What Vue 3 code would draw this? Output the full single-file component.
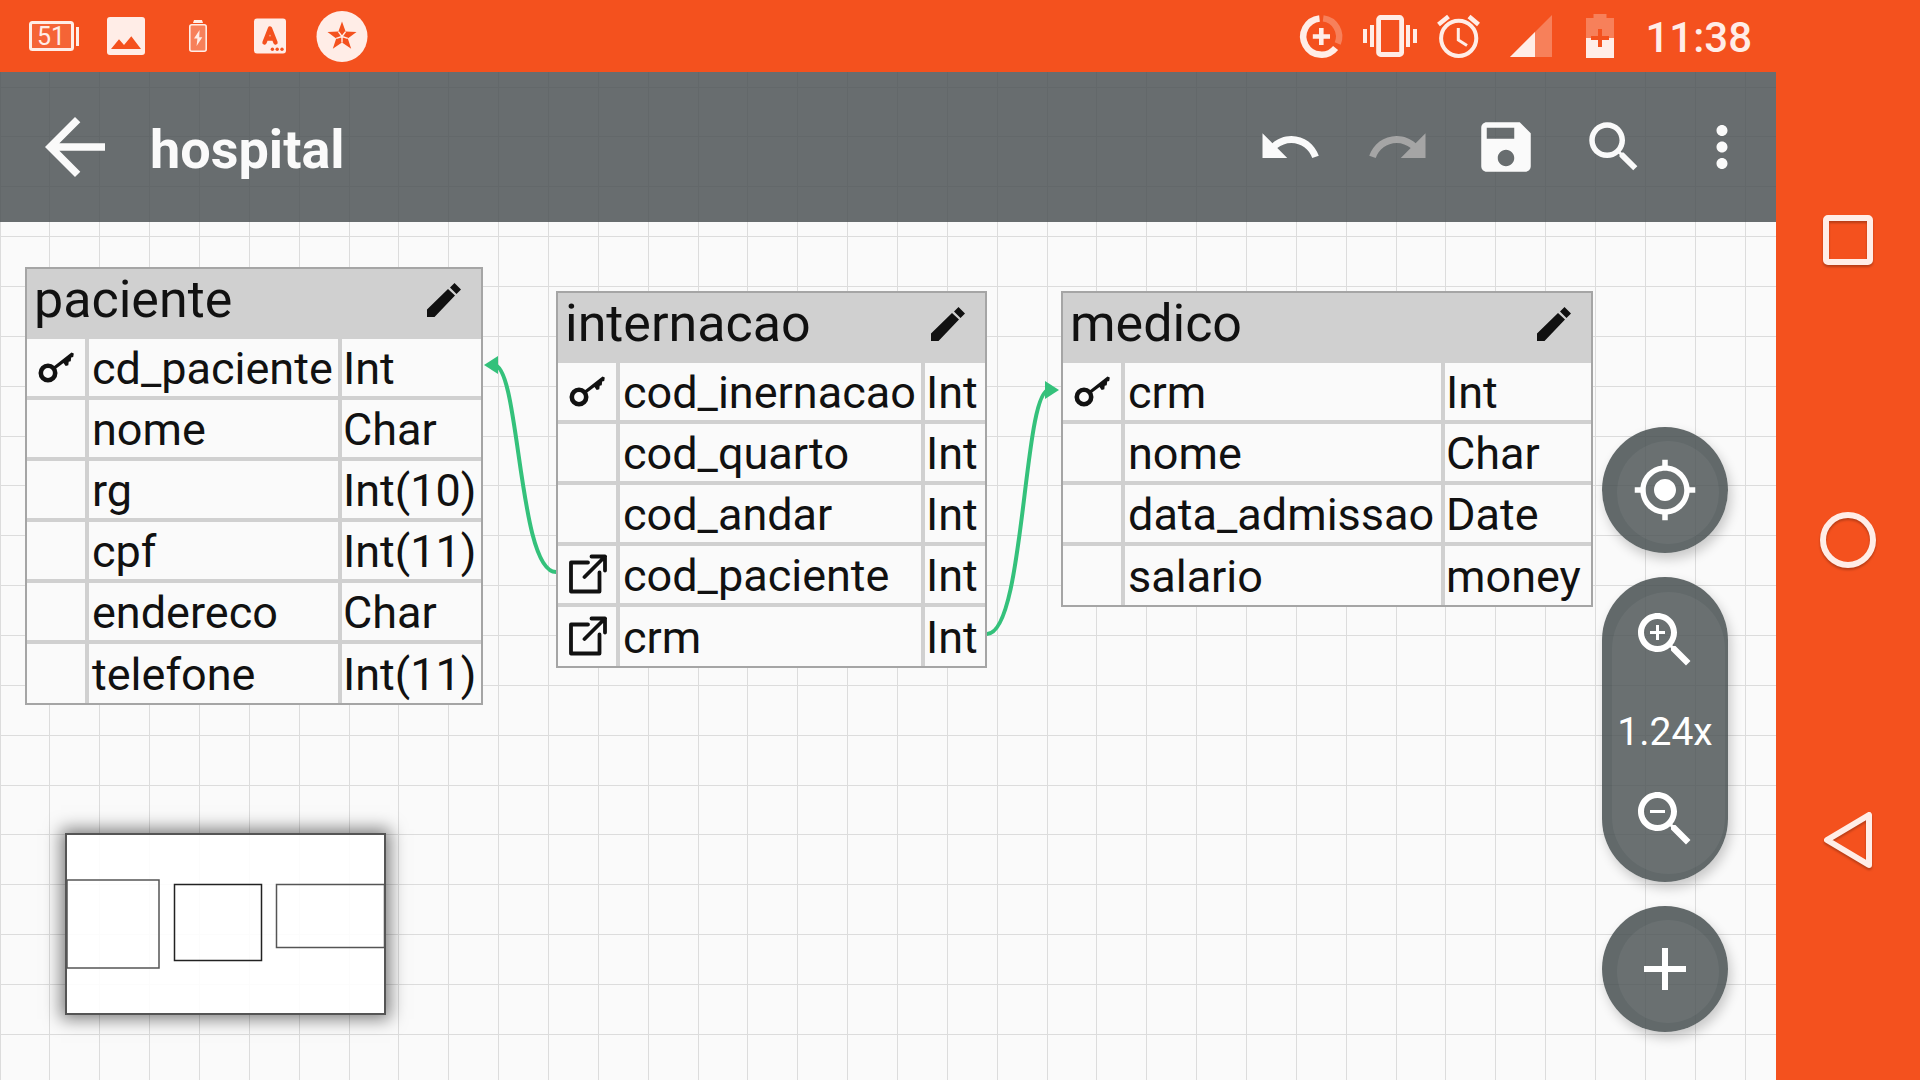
<script setup>
const tables = [
  {
    name: 'paciente', x: 25, y: 195, widths: [58, 253, 143],
    columns: [
      { key: 'primary', name: 'cd_paciente', type: 'Int' },
      { name: 'nome', type: 'Char' },
      { name: 'rg', type: 'Int(10)' },
      { name: 'cpf', type: 'Int(11)' },
      { name: 'endereco', type: 'Char' },
      { name: 'telefone', type: 'Int(11)' },
    ],
  },
  {
    name: 'internacao', x: 556, y: 219, widths: [58, 305, 64],
    columns: [
      { key: 'primary', name: 'cod_inernacao', type: 'Int' },
      { name: 'cod_quarto', type: 'Int' },
      { name: 'cod_andar', type: 'Int' },
      { key: 'foreign', name: 'cod_paciente', type: 'Int' },
      { key: 'foreign', name: 'crm', type: 'Int' },
    ],
  },
  {
    name: 'medico', x: 1061, y: 219, widths: [58, 320, 150],
    columns: [
      { key: 'primary', name: 'crm', type: 'Int' },
      { name: 'nome', type: 'Char' },
      { name: 'data_admissao', type: 'Date' },
      { name: 'salario', type: 'money' },
    ],
  },
]

const lens = 'M15.5 14h-.79l-.28-.27C15.41 12.59 16 11.11 16 9.5 16 5.91 13.09 3 9.5 3S3 5.91 3 9.5 5.91 16 9.5 16c1.61 0 3.09-.59 4.23-1.57l.27.28v.79l5 4.99L20.49 19l-4.99-5zm-6 0C7.01 14 5 11.99 5 9.5S7.01 5 9.5 5 14 7.01 14 9.5 11.99 14 9.5 14z'

const actions = [
  { label: 'Undo', path: 'M12.5 8c-2.65 0-5.05.99-6.9 2.6L2 7v9h9l-3.62-3.62c1.39-1.16 3.16-1.88 5.12-1.88 3.54 0 6.55 2.31 7.6 5.5l2.37-.78C21.08 11.03 17.15 8 12.5 8z' },
  { label: 'Redo', disabled: true, path: 'M18.4 10.6C16.55 8.99 14.15 8 11.5 8c-4.65 0-8.58 3.03-9.96 7.22L3.9 16c1.05-3.19 4.05-5.5 7.6-5.5 1.95 0 3.73.72 5.12 1.88L13 16h9V7l-3.6 3.6z' },
  { label: 'Save', path: 'M17 3H5c-1.11 0-2 .9-2 2v14c0 1.1.89 2 2 2h14c1.1 0 2-.9 2-2V7l-4-4zm-5 16c-1.66 0-3-1.34-3-3s1.34-3 3-3 3 1.34 3 3-1.34 3-3 3zm3-10H5V5h10v4z' },
  { label: 'Search', path: lens },
  { label: 'More options', path: 'M12 8c1.1 0 2-.9 2-2s-.9-2-2-2-2 .9-2 2 .9 2 2 2zm0 2c-1.1 0-2 .9-2 2s.9 2 2 2 2-.9 2-2-.9-2-2-2zm0 6c-1.1 0-2 .9-2 2s.9 2 2 2 2-.9 2-2-.9-2-2-2z' },
]

// Seven grid squares span 349 px at the current zoom.
let gridPath = ''
for (let i = 0; i < 80; i++) {
  const p = Math.floor((i * 349) / 7)
  gridPath += `M${p} 0h1v4000h-1zM0 ${p + 15}h4000v1h-4000z`
}
</script>

<template>
  <div class="device">
    <div class="screen">
      <header class="status">
        <div class="notices">
          <svg class="glyph" viewBox="0 0 52 72">
            <rect x="2.5" y="22.5" width="42" height="27" rx="2" fill-opacity=".12" stroke="#ffede7" stroke-width="3" />
            <rect x="48" y="27" width="3" height="19" />
            <text x="23" y="45" text-anchor="middle" class="level">51</text>
          </svg>
          <svg class="glyph" viewBox="0 0 52 72">
            <rect x="7" y="17" width="38" height="38" rx="3" />
            <path class="cut" d="M11 49l8-9.700 5 5.700 7.300-8.700L41 49z" />
          </svg>
          <svg class="glyph" viewBox="0 0 52 72">
            <path d="M22 20h8l1 3H21z" />
            <rect x="17.800" y="24.800" width="16.400" height="26.400" rx="2" fill-opacity=".3" stroke="#ffede7" stroke-width="1.600" />
            <path d="M27.600 30L22 38.600h3.400L24.600 46l5.700-8.700h-3.100z" />
          </svg>
          <svg class="glyph" viewBox="0 0 52 72">
            <rect x="10" y="18.500" width="32" height="35" rx="3" />
            <path d="M20.500 42.500L26 28.500l5.500 14M23 38.500h6" fill="none" stroke="#f4511e" stroke-width="4.400" stroke-linecap="round" stroke-linejoin="round" />
            <g class="cut">
              <circle cx="28.400" cy="49.300" r="1.700" />
              <circle cx="33.200" cy="49.300" r="1.700" />
              <circle cx="38" cy="49.300" r="1.700" />
            </g>
          </svg>
          <svg class="glyph" viewBox="0 0 52 72">
            <circle cx="26" cy="36.500" r="25.500" />
            <path class="cut" d="M26 21.500l3.600 10.100 10.900.4-8.700 6.400 3.400 10.300-9.200-6.100-9.200 6.100 3.400-10.300-8.700-6.400 10.900-.4z" />
            <path d="M26 36.500l3.600-4.900M26 36.500l5.800 1.900M26 36.500v6.100M26 36.500l-5.800 1.900M26 36.500l-3.600-4.900" stroke="#ffede7" stroke-width="1.400" />
          </svg>
        </div>
        <div class="system">
          <svg class="glyph" viewBox="0 0 52 72">
            <g fill="none" stroke="#ffede7" stroke-width="6.500">
              <path d="M24.500 18.400A18.200 18.200 0 1 0 40.600 48" />
              <path d="M28.200 18.400A18.200 18.200 0 0 1 42.700 43.500" opacity=".3" />
            </g>
            <path d="M24 28h4.600v6.200H35v4.600h-6.400V45H24v-6.200h-6.200v-4.600H24z" />
          </svg>
          <svg class="glyph" viewBox="0 0 52 72">
            <rect x="13.600" y="17.500" width="23" height="37" rx="2" fill="none" stroke="#ffede7" stroke-width="4.800" />
            <path d="M-2 29h4v14h-4zM5 25h4v22H5zM41 25h4v22h-4zM48 29h4v14h-4z" />
          </svg>
          <svg class="glyph" viewBox="0 0 52 72">
            <g fill="none" stroke="#ffede7" stroke-width="4">
              <circle cx="23.700" cy="38.300" r="17.600" />
              <path d="M3.500 24.500l10-8M34 16.500l9.500 8" stroke-width="4.600" />
              <path d="M23.300 28v12l8.700 5.600" stroke-width="3" />
            </g>
          </svg>
          <svg class="glyph" viewBox="0 0 52 72">
            <path d="M5 57l42-42v42z" opacity=".3" />
            <path d="M5 57l25-25v25z" />
          </svg>
          <svg class="glyph" viewBox="0 0 52 72">
            <path d="M11 38V18h7.500v-4h13v4H39v20z" opacity=".3" />
            <path d="M11 38h28v20H11z" />
            <path class="cut" d="M23 29h4v7h7v4h-7v7h-4v-7h-7v-4h7z" />
          </svg>
          <time class="clock">11:38</time>
        </div>
      </header>

      <main class="work">
        <svg class="backdrop" aria-hidden="true">
          <path :d="gridPath" fill="#dcdcdc" />
        </svg>

        <header class="appbar">
          <button class="back" aria-label="Back">
            <svg viewBox="0 0 24 24"><path d="M20 11H7.830l5.590-5.590L12 4l-8 8 8 8 1.410-1.410L7.830 13H20v-2z" /></svg>
          </button>
          <h1 class="title">hospital</h1>
          <nav class="actions">
            <button v-for="a in actions" :key="a.label" :aria-label="a.label" :disabled="a.disabled">
              <svg viewBox="0 0 24 24"><path :d="a.path" /></svg>
            </button>
          </nav>
        </header>

        <svg class="links" aria-hidden="true">
          <path class="wire" d="M494 293C520 293 518 500 556 500" />
          <path class="tip" d="M484 293l14-9v18z" />
          <path class="wire" d="M987 562C1025 562 1023 318 1049 318" />
          <path class="tip" d="M1059 318l-14-9v18z" />
        </svg>

        <table
          v-for="t in tables"
          :key="t.name"
          class="entity"
          :style="{ left: t.x + 'px', top: t.y + 'px' }"
        >
          <colgroup>
            <col v-for="(w, i) in t.widths" :key="i" :style="{ width: w + 'px' }" />
          </colgroup>
          <thead>
            <tr>
              <th colspan="3">
                <div class="head">
                  {{ t.name }}
                  <button class="edit" :aria-label="'Edit ' + t.name">
                    <svg viewBox="0 0 34 34"><path d="M0 34v-7.500L21 6l7 6.500L7.500 34zM23 4.500L27.500 0 34 6.500 29.500 11z" /></svg>
                  </button>
                </div>
              </th>
            </tr>
          </thead>
          <tbody>
            <tr v-for="c in t.columns" :key="c.name">
              <td class="mark">
                <svg v-if="c.key === 'primary'" viewBox="0 0 40 40">
                  <circle cx="12" cy="26" r="7.200" fill="none" stroke="#111" stroke-width="4.600" />
                  <path d="M17 20L35.500 5.500l2.300 1-.6 3.500-2 .6-.5 3.700-2 .4-.4 3.600-2.600.6-2.200-3-8 6.200z" />
                </svg>
                <svg v-else-if="c.key === 'foreign'" viewBox="0 0 40 40">
                  <path d="M21 8.500H4v29h28.500V18.500M24.500 2.500H38v14M38 2.500L17.500 23" fill="none" stroke="#111" stroke-width="3.800" stroke-linecap="round" stroke-linejoin="round" />
                </svg>
              </td>
              <td class="field">{{ c.name }}</td>
              <td>{{ c.type }}</td>
            </tr>
          </tbody>
        </table>

        <svg class="minimap" viewBox="0 0 321 182" role="img" aria-label="Diagram overview">
          <g fill="none" stroke="#555" stroke-width="1.500">
            <rect x="2" y="47" width="92" height="88" />
            <rect x="109.500" y="51.500" width="87" height="76" stroke="#222" />
            <rect x="211.500" y="51.500" width="108" height="63" />
            <rect x="1" y="1" width="319" height="180" stroke-width="2" />
          </g>
        </svg>

        <aside class="controls">
          <button class="round" aria-label="Center diagram">
            <svg class="small" viewBox="0 0 24 24"><path d="M12 8c-2.210 0-4 1.790-4 4s1.790 4 4 4 4-1.790 4-4-1.790-4-4-4zm8.940 3c-.46-4.170-3.770-7.480-7.940-7.940V1h-2v2.060C6.830 3.520 3.520 6.830 3.060 11H1v2h2.060c.46 4.170 3.770 7.480 7.940 7.940V23h2v-2.060c4.170-.46 7.480-3.770 7.940-7.940H23v-2h-2.060zM12 19c-3.870 0-7-3.130-7-7s3.130-7 7-7 7 3.130 7 7-3.130 7-7 7z" /></svg>
          </button>
          <div class="zoom">
            <button aria-label="Zoom in">
              <svg viewBox="0 0 24 24"><path :d="lens" /><path d="M12 10h-2v2H9v-2H7V9h2V7h1v2h2v1z" /></svg>
            </button>
            <output class="factor">1.24x</output>
            <button aria-label="Zoom out">
              <svg viewBox="0 0 24 24"><path :d="lens" /><path d="M7 9h5v1H7z" /></svg>
            </button>
          </div>
          <button class="round" aria-label="Add table">
            <svg viewBox="0 0 24 24"><path d="M19 13h-6v6h-2v-6H5v-2h6V5h2v6h6v2z" /></svg>
          </button>
        </aside>
      </main>
    </div>

    <nav class="navbar">
      <button aria-label="Recent apps">
        <svg viewBox="0 0 60 60"><rect x="8" y="8" width="44" height="44" rx="2" /></svg>
      </button>
      <button aria-label="Home">
        <svg viewBox="0 0 60 60"><circle cx="30" cy="30" r="25" /></svg>
      </button>
      <button aria-label="Back">
        <svg viewBox="0 0 60 60"><path d="M51 5v50L9 30z" /></svg>
      </button>
    </nav>
  </div>
</template>

<style>
body {
  margin: 0;
}
</style>

<style scoped>
.device {
  display: flex;
  min-height: 100vh;
  font-family: Roboto, sans-serif;
  color: #111;
}

.screen {
  flex: 1;
  min-width: 0;
  display: flex;
  flex-direction: column;
}

button {
  display: block;
  padding: 0;
  border: 0;
  background: none;
  color: inherit;
  cursor: pointer;
}

svg {
  display: block;
  fill: currentColor;
}

.status {
  display: flex;
  justify-content: space-between;
  height: 72px;
  padding: 0 24px 0 28px;
  background: #f4511e;
  color: #ffede7;
}

.notices,
.system {
  display: flex;
  align-items: center;
  gap: 20px;
}

.system {
  gap: 18px;
}

.glyph {
  width: 52px;
  height: 72px;
  overflow: visible;
}

.cut {
  fill: #f4511e;
}

.level {
  font-size: 25px;
}

.clock {
  padding-top: 4px;
  font-size: 42px;
  line-height: 48px;
  font-weight: 500;
}

.work {
  position: relative;
  flex: 1;
  background: #fafafa;
  overflow: hidden;
}

.backdrop,
.links {
  position: absolute;
  inset: 0;
  width: 100%;
  height: 100%;
}

.appbar {
  position: relative;
  display: flex;
  align-items: center;
  height: 150px;
  padding: 0 21px 0 30px;
  background: rgba(78, 84, 86, 0.85);
  color: #fafafa;
}

.back svg {
  width: 90px;
  height: 90px;
}

.title {
  flex: 1;
  margin: 0;
  padding: 5px 0 0 30px;
  font-size: 54px;
  line-height: 62px;
  font-weight: 700;
}

.actions {
  display: flex;
  gap: 42px;
}

.actions svg {
  width: 66px;
  height: 66px;
}

.actions button:disabled {
  color: #a5a5a5;
}

.wire {
  fill: none;
  stroke: #34c17b;
  stroke-width: 4px;
}

.tip {
  fill: #34c17b;
}

.entity {
  position: absolute;
  table-layout: fixed;
  width: 0;
  border: 2px solid #a5a5a5;
  border-spacing: 0;
  background: #fafafa;
  font-size: 45px;
  line-height: 55px;
  white-space: nowrap;
}

.entity th {
  padding: 1px 20px 9px 7px;
  background: #d0d0d0;
  font-size: 52px;
  font-weight: 400;
  line-height: 60px;
  text-align: left;
}

.head {
  display: flex;
  align-items: center;
  justify-content: space-between;
}

.edit svg {
  width: 34px;
  height: 34px;
}

.entity td {
  height: 55px;
  padding: 2px 0 0 1px;
  border-bottom: 4px solid #d0d0d0;
  border-left: 4px solid #d0d0d0;
}

.entity .field {
  padding-left: 3px;
}

.entity .mark {
  padding: 0 0 2px;
  border-left: 0;
}

.entity tr:last-child td {
  height: 57px;
  border-bottom: 0;
}

.mark svg {
  width: 40px;
  height: 40px;
  margin: 0 auto;
}

.minimap {
  position: absolute;
  left: 65px;
  bottom: 65px;
  width: 321px;
  height: 182px;
  background: rgba(255, 255, 255, 0.9);
  box-shadow: 0 0 16px 4px rgba(0, 0, 0, 0.5);
}

.controls {
  position: absolute;
  right: 48px;
  bottom: 48px;
  display: flex;
  flex-direction: column;
  gap: 24px;
  width: 126px;
  color: #fff;
}

.round,
.zoom {
  position: relative;
  display: flex;
  flex-direction: column;
  align-items: center;
  justify-content: center;
  border-radius: 63px;
  background: rgba(72, 80, 82, 0.86);
  box-shadow: 3px 6px 12px rgba(0, 0, 0, 0.2);
}

.round {
  height: 126px;
}

.round::before,
.zoom::before {
  content: "";
  position: absolute;
  inset: 14px 9px 9px 15px;
  border-radius: 57px;
  background: rgba(255, 255, 255, 0.05);
}

.zoom::before {
  inset: 15px 3px 8px 10px;
}

.zoom {
  justify-content: space-between;
  height: 251px;
  padding: 27px 0;
}

.controls svg {
  position: relative;
  width: 72px;
  height: 72px;
}

.controls .small {
  width: 66px;
  height: 66px;
}

.factor {
  position: relative;
  padding-top: 4px;
  font-size: 39px;
  line-height: 46px;
}

.navbar {
  display: flex;
  flex-direction: column;
  justify-content: center;
  width: 144px;
  background: #f4511e;
  color: #ffede7;
}

.navbar button {
  display: flex;
  align-items: center;
  justify-content: center;
  height: 300px;
}

.navbar svg {
  width: 60px;
  height: 60px;
  fill: none;
  stroke: currentColor;
  stroke-width: 6px;
  stroke-linejoin: round;
  filter: drop-shadow(0 2px 1px rgba(0, 0, 0, 0.25));
}
</style>
